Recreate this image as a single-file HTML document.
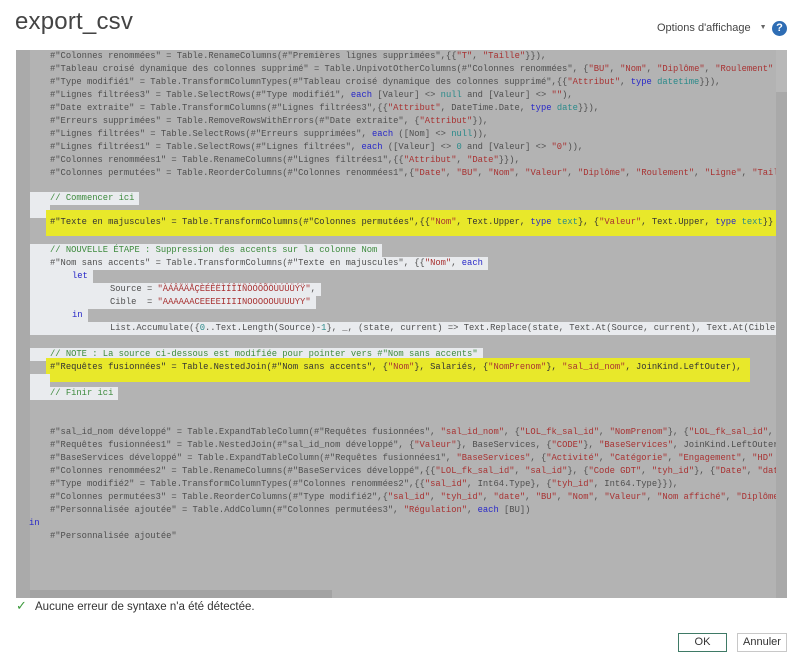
<!DOCTYPE html>
<html><head><meta charset="utf-8"><style>
*{margin:0;padding:0;box-sizing:border-box}
body{width:800px;height:663px;background:#fff;position:relative;overflow:hidden;font-family:"Liberation Sans",sans-serif}
#title{position:absolute;left:15px;top:8px;font-size:24px;color:#444;font-weight:300;letter-spacing:0.2px}
#opt{position:absolute;left:657px;top:22px;font-size:11px;color:#444}
#opt span{font-size:7px;margin-left:9px;color:#666;vertical-align:2px}
#help{position:absolute;left:772px;top:21px;width:15px;height:15px;border-radius:50%;background:#2e6db4;color:#fff;font-size:11px;font-weight:bold;text-align:center;line-height:15px}
#ed{position:absolute;left:16px;top:50px;width:771px;height:548px;background:#b3b3b3;overflow:hidden}
#gut{position:absolute;left:0;top:0;width:14px;height:100%;background:#aaaaaa}
#vs{position:absolute;right:0;top:0;width:11px;height:100%;background:#a9a9a9}
#vs div{position:absolute;left:0;top:0;width:11px;height:42px;background:#b8b8b8}
#hs{position:absolute;left:14px;top:540px;width:302px;height:8px;background:#a3a3a3}
.l{position:absolute;left:0;height:13px;font-family:"Liberation Mono",monospace;font-size:8.8px;line-height:13px;color:#4f4f4f;white-space:pre}
.bg{background:#e9ebee;padding-right:5px}
.s{color:#a83232}.k{color:#2727c8}.c{color:#3d8a3d}.n{color:#2a8a8a}
.y{background:#e8e82a;color:#333}
#ok{position:absolute;left:678px;top:633px;width:49px;height:19px;border:1px solid #3f7a66;font-size:11px;text-align:center;line-height:17px;color:#333}
#an{position:absolute;left:737px;top:633px;width:50px;height:19px;border:1px solid #c8c8c8;font-size:11px;text-align:center;line-height:17px;color:#333}
#msg{position:absolute;left:35px;top:601px;font-size:11.5px;color:#333}
#chk{position:absolute;left:16px;top:598px;font-size:13px;color:#3c9a3c}
</style></head><body>
<div id="title">export_csv</div>
<div id="opt">Options d'affichage<span>▼</span></div>
<div id="help">?</div>
<div id="ed">
<div id="gut"></div>
<div class="l" style="top:0px;left:34px">#"Colonnes renommées" = Table.RenameColumns(#"Premières lignes supprimées",{{<span class="s">"T"</span>, <span class="s">"Taille"</span>}}),</div>
<div class="l" style="top:13px;left:34px">#"Tableau croisé dynamique des colonnes supprimé" = Table.UnpivotOtherColumns(#"Colonnes renommées", {<span class="s">"BU"</span>, <span class="s">"Nom"</span>, <span class="s">"Diplôme"</span>, <span class="s">"Roulement"</span></div>
<div class="l" style="top:26px;left:34px">#"Type modifié1" = Table.TransformColumnTypes(#"Tableau croisé dynamique des colonnes supprimé",{{<span class="s">"Attribut"</span>, <span class="k">type</span> <span class="n">datetime</span>}}),</div>
<div class="l" style="top:39px;left:34px">#"Lignes filtrées3" = Table.SelectRows(#"Type modifié1", <span class="k">each</span> [Valeur] &lt;&gt; <span class="n">null</span> and [Valeur] &lt;&gt; <span class="s">""</span>),</div>
<div class="l" style="top:52px;left:34px">#"Date extraite" = Table.TransformColumns(#"Lignes filtrées3",{{<span class="s">"Attribut"</span>, DateTime.Date, <span class="k">type</span> <span class="n">date</span>}}),</div>
<div class="l" style="top:65px;left:34px">#"Erreurs supprimées" = Table.RemoveRowsWithErrors(#"Date extraite", {<span class="s">"Attribut"</span>}),</div>
<div class="l" style="top:78px;left:34px">#"Lignes filtrées" = Table.SelectRows(#"Erreurs supprimées", <span class="k">each</span> ([Nom] &lt;&gt; <span class="n">null</span>)),</div>
<div class="l" style="top:91px;left:34px">#"Lignes filtrées1" = Table.SelectRows(#"Lignes filtrées", <span class="k">each</span> ([Valeur] &lt;&gt; <span class="n">0</span> and [Valeur] &lt;&gt; <span class="s">"0"</span>)),</div>
<div class="l" style="top:104px;left:34px">#"Colonnes renommées1" = Table.RenameColumns(#"Lignes filtrées1",{{<span class="s">"Attribut"</span>, <span class="s">"Date"</span>}}),</div>
<div class="l" style="top:117px;left:34px">#"Colonnes permutées" = Table.ReorderColumns(#"Colonnes renommées1",{<span class="s">"Date"</span>, <span class="s">"BU"</span>, <span class="s">"Nom"</span>, <span class="s">"Valeur"</span>, <span class="s">"Diplôme"</span>, <span class="s">"Roulement"</span>, <span class="s">"Ligne"</span>, <span class="s">"Taille"</span></div>
<div class="l bg" style="top:142px;left:14px;padding-left:20px"><span class="c">// Commencer ici</span></div>
<div class="l bg" style="top:155px;left:14px;width:20px"></div>
<div class="l y" style="top:160px;left:30px;height:26px;padding:6px 0 0 4px;width:745px">#"Texte en majuscules" = Table.TransformColumns(#"Colonnes permutées",{{<span class="s">"Nom"</span>, Text.Upper, <span class="k">type</span> <span class="n">text</span>}, {<span class="s">"Valeur"</span>, Text.Upper, <span class="k">type</span> <span class="n">text</span>}}</div>
<div class="l bg" style="top:194px;left:14px;padding-left:20px"><span class="c">// NOUVELLE ÉTAPE : Suppression des accents sur la colonne Nom</span></div>
<div class="l bg" style="top:207px;left:14px;padding-left:20px">#"Nom sans accents" = Table.TransformColumns(#"Texte en majuscules", {{<span class="s">"Nom"</span>, <span class="k">each</span></div>
<div class="l bg" style="top:220px;left:14px;padding-left:42px"><span class="k">let</span></div>
<div class="l bg" style="top:233px;left:14px;padding-left:80px">Source = <span class="s">"ÀÁÂÃÄÅÇÈÉÊËÌÍÎÏÑÒÓÔÕÖÙÚÛÜÝŸ"</span>,</div>
<div class="l bg" style="top:246px;left:14px;padding-left:80px">Cible  = <span class="s">"AAAAAACEEEEIIIINOOOOOUUUUYY"</span></div>
<div class="l bg" style="top:259px;left:14px;padding-left:42px"><span class="k">in</span></div>
<div class="l bg" style="top:272px;left:14px;padding-left:80px;width:760px">List.Accumulate({<span class="n">0</span>..Text.Length(Source)-<span class="n">1</span>}, _, (state, current) =&gt; Text.Replace(state, Text.At(Source, current), Text.At(Cible, c</div>
<div class="l bg" style="top:298px;left:14px;padding-left:20px"><span class="c">// NOTE : La source ci-dessous est modifiée pour pointer vers #"Nom sans accents"</span></div>
<div class="l y" style="top:308px;left:30px;height:24px;padding:3px 8px 0 4px">#"Requêtes fusionnées" = Table.NestedJoin(#"Nom sans accents", {<span class="s">"Nom"</span>}, Salariés, {<span class="s">"NomPrenom"</span>}, <span class="s">"sal_id_nom"</span>, JoinKind.LeftOuter),</div>
<div class="l bg" style="top:324px;left:14px;width:20px;height:26px"></div>
<div class="l bg" style="top:337px;left:14px;padding-left:20px"><span class="c">// Finir ici</span></div>
<div class="l" style="top:376px;left:34px">#"sal_id_nom développé" = Table.ExpandTableColumn(#"Requêtes fusionnées", <span class="s">"sal_id_nom"</span>, {<span class="s">"LOL_fk_sal_id"</span>, <span class="s">"NomPrenom"</span>}, {<span class="s">"LOL_fk_sal_id"</span>,</div>
<div class="l" style="top:389px;left:34px">#"Requêtes fusionnées1" = Table.NestedJoin(#"sal_id_nom développé", {<span class="s">"Valeur"</span>}, BaseServices, {<span class="s">"CODE"</span>}, <span class="s">"BaseServices"</span>, JoinKind.LeftOuter</div>
<div class="l" style="top:402px;left:34px">#"BaseServices développé" = Table.ExpandTableColumn(#"Requêtes fusionnées1", <span class="s">"BaseServices"</span>, {<span class="s">"Activité"</span>, <span class="s">"Catégorie"</span>, <span class="s">"Engagement"</span>, <span class="s">"HD"</span></div>
<div class="l" style="top:415px;left:34px">#"Colonnes renommées2" = Table.RenameColumns(#"BaseServices développé",{{<span class="s">"LOL_fk_sal_id"</span>, <span class="s">"sal_id"</span>}, {<span class="s">"Code GDT"</span>, <span class="s">"tyh_id"</span>}, {<span class="s">"Date"</span>, <span class="s">"date"</span></div>
<div class="l" style="top:428px;left:34px">#"Type modifié2" = Table.TransformColumnTypes(#"Colonnes renommées2",{{<span class="s">"sal_id"</span>, Int64.Type}, {<span class="s">"tyh_id"</span>, Int64.Type}}),</div>
<div class="l" style="top:441px;left:34px">#"Colonnes permutées3" = Table.ReorderColumns(#"Type modifié2",{<span class="s">"sal_id"</span>, <span class="s">"tyh_id"</span>, <span class="s">"date"</span>, <span class="s">"BU"</span>, <span class="s">"Nom"</span>, <span class="s">"Valeur"</span>, <span class="s">"Nom affiché"</span>, <span class="s">"Diplôme"</span></div>
<div class="l" style="top:454px;left:34px">#"Personnalisée ajoutée" = Table.AddColumn(#"Colonnes permutées3", <span class="s">"Régulation"</span>, <span class="k">each</span> [BU])</div>
<div class="l" style="top:467px;left:13px"><span class="k">in</span></div>
<div class="l" style="top:480px;left:34px">#"Personnalisée ajoutée"</div>
<div id="hs"></div>
<div id="vs"><div></div></div>
</div>
<div id="chk">✓</div>
<div id="msg">Aucune erreur de syntaxe n'a été détectée.</div>
<div id="ok">OK</div>
<div id="an">Annuler</div>
</body></html>
